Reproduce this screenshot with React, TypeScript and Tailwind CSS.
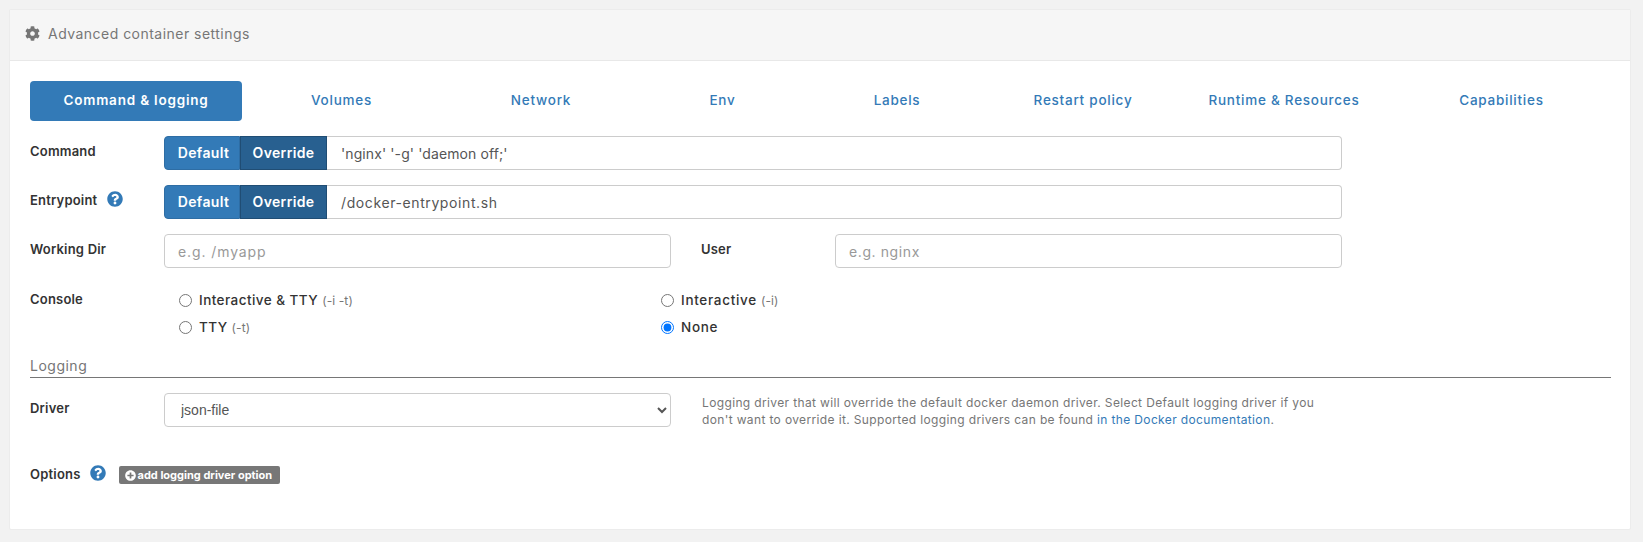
import React from 'react';
import { FaCog, FaQuestionCircle, FaPlusCircle } from 'react-icons/fa';

const tabs = ['Volumes', 'Network', 'Env', 'Labels', 'Restart policy', 'Runtime & Resources', 'Capabilities'];

const Label: React.FC<{ children: React.ReactNode; className?: string }> = ({ children, className }) => (
  <label className={`text-[13px] font-semibold leading-[18px] tracking-[0.2px] text-[#333] ${className ?? ''}`}>{children}</label>
);

const OverrideInput: React.FC<{ value: string; spacing: string }> = ({ value, spacing }) => (
  <div className="ml-[134px] flex h-[34px] w-[1178px]">
    <button className="h-full w-[76px] rounded-l-[4px] border border-[#2e6da4] bg-[#337ab7] pb-[2px] pl-[3px] text-[14px] font-semibold tracking-[0.35px] text-white">Default</button>
    <button className="h-full w-[87px] border border-[#204d74] bg-[#286090] pb-[2px] text-[14px] font-semibold tracking-[0.35px] text-white">Override</button>
    <input
      readOnly
      value={value}
      className={`h-full flex-1 rounded-r-[4px] border border-l-0 border-[#ccc] bg-white px-[14px] text-[14px] text-[#555] outline-none ${spacing}`}
    />
  </div>
);

const Radio: React.FC<{ label: string; hint?: string; checked?: boolean; spacing: string }> = ({ label, hint, checked, spacing }) => (
  <label className="flex h-[27px] items-center">
    <input type="radio" name="console" defaultChecked={checked} className="m-0 h-[13px] w-[13px]" />
    <span className={`ml-[7px] text-[13.5px] font-medium text-[#333] ${spacing}`}>{label}</span>
    {hint && <span className="ml-[4px] text-[12px] tracking-[0.1px] text-[#767676]">{hint}</span>}
  </label>
);

export default function App() {
  return (
    <div className="h-[542px] w-[1643px] bg-[#f2f2f2] pl-[9px] pt-[9px] font-['Inter','Liberation_Sans',sans-serif]">
      <div className="h-[521px] w-[1622px] overflow-hidden rounded-[2px] border border-[#ececec] bg-white">
        <div className="flex h-[51px] items-center border-b border-[#e8e8e8] bg-[#f6f6f6] pb-[3px] pl-[15px] text-[#767676]">
          <FaCog className="h-[15px] w-[15px]" />
          <span className="ml-[8px] text-[14px] tracking-[0.47px]">Advanced container settings</span>
        </div>

        <div className="pl-[20px] pt-[20px]">
          <div className="mb-[15px] grid h-[40px] w-[1581px] grid-cols-[212px_199px_200px_163px_186px_186px_216px_219px]">
            <div className="flex items-center justify-center rounded-[4px] bg-[#337ab7] pb-[2px] text-[13.5px] font-semibold tracking-[0.8px] text-white">
              Command &amp; logging
            </div>
            {tabs.map((tab) => (
              <div key={tab} className="flex items-center justify-center whitespace-nowrap pb-[2px] text-[13.5px] font-medium tracking-[0.75px] text-[#337ab7]">
                {tab}
              </div>
            ))}
          </div>

          <div className="relative mb-[15px] flex items-center">
            <Label className="absolute left-0 top-[6px]">Command</Label>
            <OverrideInput value="'nginx' '-g' 'daemon off;'" spacing="tracking-[0.1px]" />
          </div>

          <div className="relative mb-[15px] flex items-center">
            <Label className="absolute left-0 top-[6px] flex items-center">
              Entrypoint
              <FaQuestionCircle className="ml-[10px] mt-[-3px] h-[16px] w-[16px] text-[#337ab7]" />
            </Label>
            <OverrideInput value="/docker-entrypoint.sh" spacing="tracking-[0.6px]" />
          </div>

          <div className="mb-[19px] flex h-[34px]">
            <Label className="w-[134px] pt-[6px]">Working Dir</Label>
            <input placeholder="e.g. /myapp" className="h-full w-[507px] rounded-[4px] border border-[#ccc] px-[13px] text-[14px] tracking-[0.9px] outline-none placeholder:text-[#999]" />
            <Label className="ml-[30px] w-[134px] pt-[6px]">User</Label>
            <input placeholder="e.g. nginx" className="h-full w-[507px] rounded-[4px] border border-[#ccc] px-[13px] text-[14px] tracking-[0.6px] outline-none placeholder:text-[#999]" />
          </div>

          <div className="flex h-[54px]">
            <Label className="w-[149px] pt-[3px]">Console</Label>
            <div className="w-[482px]">
              <Radio label="Interactive & TTY" hint="(-i -t)" spacing="tracking-[0.45px]" />
              <Radio label="TTY" hint="(-t)" spacing="tracking-[0.45px]" />
            </div>
            <div>
              <Radio label="Interactive" hint="(-i)" spacing="tracking-[0.7px]" />
              <Radio label="None" checked spacing="tracking-[0.7px]" />
            </div>
          </div>

          <div className="mt-[16px] h-[21px] w-[1581px] border-b border-[#767676] text-[14px] leading-[18px] tracking-[0.5px] text-[#767676]">Logging</div>

          <div className="mt-[15px] flex h-[34px]">
            <Label className="w-[134px] pt-[6px]">Driver</Label>
            <select defaultValue="json-file" className="h-full w-[507px] rounded-[4px] border border-[#ccc] bg-white pl-[12px] pr-[4px] font-['Liberation_Sans',sans-serif] text-[14px] text-[#555] outline-none">
              <option value="json-file">json-file</option>
            </select>
            <p className="ml-[31px] w-[628px] pt-[1px] text-[12px] leading-[17px] tracking-[0.36px] text-[#767676]">
              Logging driver that will override the default docker daemon driver. Select Default logging driver if you don't want to override it. Supported logging drivers can be found <a className="text-[#337ab7]">in the Docker documentation</a>.
            </p>
          </div>

          <div className="mt-[39px] flex h-[18px] items-center">
            <Label className="mt-[-2px]">Options</Label>
            <FaQuestionCircle className="ml-[9px] mt-[-5px] h-[16px] w-[16px] text-[#337ab7]" />
            <span className="ml-[13px] flex h-[18px] w-[161px] items-center rounded-[2px] bg-[#777] pl-[6px] text-[11px] font-bold tracking-[0px] text-white">
              <FaPlusCircle className="mr-[2px] h-[11px] w-[11px]" />
              add logging driver option
            </span>
          </div>
        </div>
      </div>
    </div>
  );
}
